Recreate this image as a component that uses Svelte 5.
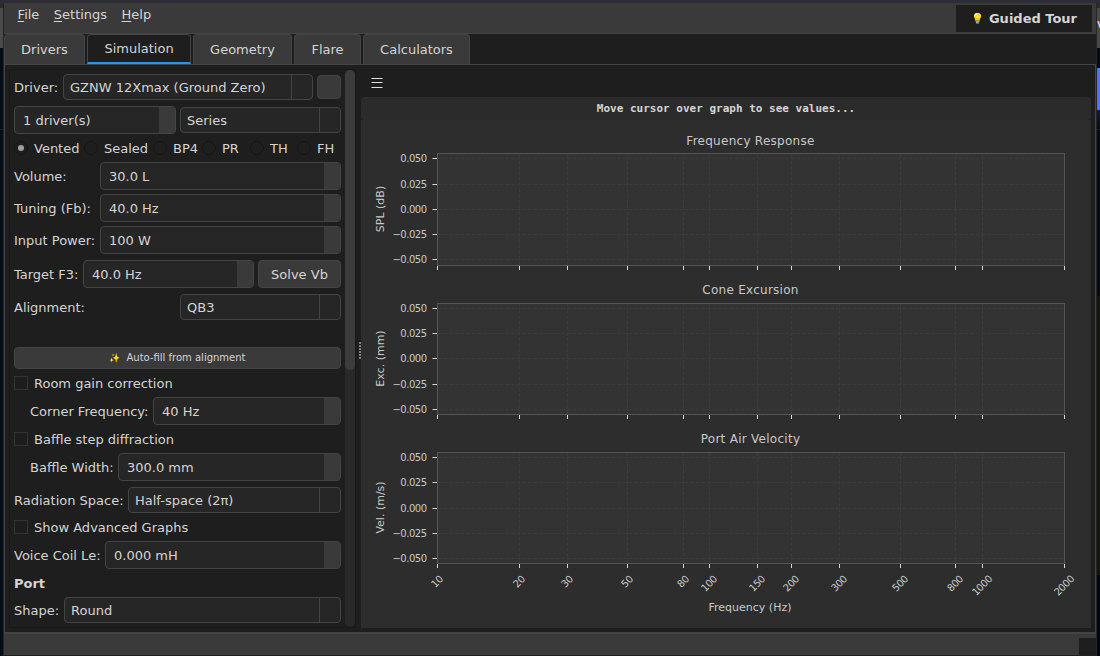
<script lang="ts">
	const menus = ['File', 'Settings', 'Help'];

	const tabs = [
		{ name: 'Drivers', width: 81 },
		{ name: 'Simulation', width: 104 },
		{ name: 'Geometry', width: 99 },
		{ name: 'Flare', width: 67 },
		{ name: 'Calculators', width: 107 }
	];
	let activeTab = $state('Simulation');

	const boxTypes = ['Vented', 'Sealed', 'BP4', 'PR', 'TH', 'FH'];
	let boxType = $state('Vented');

	const basics = [
		{ label: 'Volume:', value: '30.0 L' },
		{ label: 'Tuning (Fb):', value: '40.0 Hz' },
		{ label: 'Input Power:', value: '100 W' }
	];

	const left = 437;
	const right = 1064;
	const frequencies = [10, 20, 30, 50, 80, 100, 150, 200, 300, 500, 800, 1000, 2000];
	const tickLabels = ['0.050', '0.025', '0.000', '−0.025', '−0.050'];

	const plots = [
		{ title: 'Frequency Response', unit: 'SPL (dB)', top: 153, bottom: 265, ticks: [158, 184, 209, 234, 259] },
		{ title: 'Cone Excursion', unit: 'Exc. (mm)', top: 303, bottom: 414, ticks: [308, 333, 358, 384, 409] },
		{ title: 'Port Air Velocity', unit: 'Vel. (m/s)', top: 452, bottom: 563, ticks: [457, 482, 508, 533, 558] }
	];

	// log scale, 10 Hz to 2 kHz
	function xPos(f: number) {
		return Math.floor(left + ((right + 0.5 - left) * Math.log10(f / 10)) / Math.log10(200)) + 0.5;
	}
</script>

{#snippet combo(value: string)}
	<div class="combo">
		<span class="combo-value">{value}</span>
		<span class="combo-drop"></span>
	</div>
{/snippet}

{#snippet spin(value: string)}
	<div class="spin">
		<span class="spin-value">{value}</span>
		<span class="spin-buttons"></span>
	</div>
{/snippet}

{#snippet check(label: string)}
	<div class="row row-option">
		<span class="check"></span>
		<span>{label}</span>
	</div>
{/snippet}

<div class="desktop">
	<div class="behind behind-left"></div>
	<div class="window">
		<header class="menubar">
			<nav class="menus">
				{#each menus as menu}
					<span class="menu"><u>{menu[0]}</u>{menu.slice(1)}</span>
				{/each}
			</nav>
			<button class="tour"><span class="tour-icon">💡</span>Guided Tour</button>
		</header>

		<div class="tabs">
			{#each tabs as tab}
				<button
					class="tab"
					class:active={activeTab === tab.name}
					style="width: {tab.width}px"
					onclick={() => (activeTab = tab.name)}>{tab.name}</button
				>
			{/each}
		</div>

		<main class="pane">
			<aside class="sidebar">
				<div class="form">
					<div class="row">
						<span class="label">Driver:</span>
						{@render combo('GZNW 12Xmax (Ground Zero)')}
						<button class="btn btn-small" aria-label="Reload"></button>
					</div>
					<div class="row row-spaced wiring">
						{@render spin('1 driver(s)')}
						{@render combo('Series')}
					</div>
					<div class="row radios">
						{#each boxTypes as type}
							<button class="radio-item" onclick={() => (boxType = type)}>
								<span class="radio" class:on={boxType === type}></span>{type}
							</button>
						{/each}
					</div>
					{#each basics as field}
						<div class="row basic">
							<span class="label">{field.label}</span>
							{@render spin(field.value)}
						</div>
					{/each}
					<div class="row row-spaced target">
						<span class="label">Target F3:</span>
						{@render spin('40.0 Hz')}
						<button class="btn solve">Solve Vb</button>
					</div>
					<div class="row row-spaced alignment">
						<span class="label">Alignment:</span>
						{@render combo('QB3')}
					</div>
					<button class="btn autofill"><span class="sparkles">✨</span>Auto-fill from alignment</button>
					{@render check('Room gain correction')}
					<div class="row corner">
						<span class="label">Corner Frequency:</span>
						{@render spin('40 Hz')}
					</div>
					{@render check('Baffle step diffraction')}
					<div class="row baffle">
						<span class="label">Baffle Width:</span>
						{@render spin('300.0 mm')}
					</div>
					<div class="row row-spaced radiation">
						<span class="label">Radiation Space:</span>
						{@render combo('Half-space (2π)')}
					</div>
					{@render check('Show Advanced Graphs')}
					<div class="row coil">
						<span class="label">Voice Coil Le:</span>
						{@render spin('0.000 mH')}
					</div>
					<div class="row row-option heading">Port</div>
					<div class="row shape">
						<span class="label">Shape:</span>
						{@render combo('Round')}
					</div>
				</div>
				<div class="scrollbar"><div class="thumb"></div></div>
			</aside>

			<div class="splitter"><span class="grip"></span></div>

			<section class="graphs">
				<div class="toolbar">
					<svg width="12" height="12" viewBox="0 0 12 12" stroke="#e0e0e0">
						<path d="M.5 1.5h11M.5 5.5h11M.5 10.5h11" />
					</svg>
				</div>
				<div class="readout">Move cursor over graph to see values...</div>
				<svg class="figure" width="730" height="508" viewBox="361 120 730 508">
					{#each plots as plot}
						<rect
							class="axes"
							x={left + 0.5}
							y={plot.top + 0.5}
							width={right - left}
							height={plot.bottom - plot.top}
						/>
						{#each frequencies as f}
							<path class="grid" d="M{xPos(f)} {plot.bottom}V{plot.top + 1}" />
							<path class="tick" d="M{xPos(f)} {plot.bottom + 1}v4" />
						{/each}
						{#each plot.ticks as y, i}
							<path class="grid" d="M{left + 1} {y + 0.5}H{right}" />
							<path class="tick" d="M{left} {y + 0.5}h-4.5" />
							<text class="tick-label" x="426.5" y={y + 4} text-anchor="end">{tickLabels[i]}</text>
						{/each}
						<rect
							class="frame"
							x={left + 0.5}
							y={plot.top + 0.5}
							width={right - left}
							height={plot.bottom - plot.top}
						/>
						<text class="title" x="750.5" y={Math.round(plot.bottom - 120.2)} text-anchor="middle"
							>{plot.title}</text
						>
						<text
							class="axis-label"
							text-anchor="middle"
							transform="translate(384 {(plot.top + plot.bottom) / 2}) rotate(-90)">{plot.unit}</text
						>
					{/each}
					{#each frequencies as f}
						<text
							class="tick-label"
							text-anchor="middle"
							transform="translate({xPos(f) + 2} {580 + String(f).length * 2}) rotate(-45)">{f}</text
						>
					{/each}
					<text class="axis-label" x="750" y="611" text-anchor="middle">Frequency (Hz)</text>
				</svg>
			</section>
		</main>

		<footer class="statusbar"><span class="size-grip"></span></footer>
	</div>
	<div class="behind behind-right"><span>v</span></div>
</div>

<style>
	:global(body) {
		background: #1e1e1e;
		overflow: hidden;
	}

	.desktop {
		display: flex;
		width: 1100px;
		height: 656px;
		box-sizing: border-box;
		padding-top: 3px;
		overflow: hidden;
		background: #2d2d34;
		color: #d4d4d4;
		font-family: 'DejaVu Sans', sans-serif;
		font-size: 13px;
	}

	.desktop * {
		box-sizing: border-box;
	}

	button {
		margin: 0;
		padding: 0;
		border: none;
		background: none;
		color: inherit;
		font: inherit;
	}

	.behind {
		flex: none;
		overflow: hidden;
	}

	.behind-left {
		width: 4px;
		border-right: 1px solid #242526;
		background: linear-gradient(#2b2b2b 5px, #4a4a4a 5px 45px, #060c15 45px 126px, #15202a 126px 127px, #060c15 127px);
	}

	.behind-right {
		width: 4px;
		border-left: 1px solid #242526;
		background: linear-gradient(
			#2b2b2b 5px,
			#4a4846 5px 45px,
			#080b12 45px 65px,
			#5672f4 65px 107px,
			#151936 107px,
			#090b12 126px,
			#1b1d24 126px 127px,
			#080b12 127px 293px,
			#16140f 293px 572px,
			#000514 572px
		);
	}

	.behind-right span {
		display: block;
		margin-top: 14px;
		color: #fff;
		font-size: 12px;
	}

	.window {
		flex: 1;
		display: flex;
		flex-direction: column;
		background: #1e1e1e;
		border-bottom: 1px solid #211f22;
	}

	.menubar {
		display: flex;
		justify-content: space-between;
		height: 31px;
		padding-right: 4px;
		background: #3a3a3a;
		border-bottom: 1px solid #444;
	}

	.menus {
		display: flex;
		gap: 14.4px;
		padding: 3px 0 0 13.6px;
		line-height: 17px;
	}

	.menu u {
		text-underline-offset: 2px;
		text-decoration-thickness: 1px;
	}

	.tour {
		display: flex;
		align-items: center;
		justify-content: center;
		width: 136px;
		height: 27px;
		margin-top: 2px;
		background: #1e1e1e;
		font-weight: bold;
	}

	.tour-icon {
		margin-right: 5px;
		font-size: 10.5px;
	}

	.tabs {
		display: flex;
		gap: 2px;
		height: 30px;
	}

	.tab {
		height: 30px;
		border: 1px solid #444;
		border-bottom: none;
		border-radius: 4px 4px 0 0;
		background: #3a3a3a;
	}

	.tab.active {
		background: #1e1e1e;
		border-bottom: 2px solid #2196f3;
	}

	.pane {
		display: flex;
		height: 568px;
		padding: 4px 4px 4px;
		border: 1px solid #444;
		border-bottom: none;
	}

	.sidebar {
		display: flex;
		width: 347px;
		height: 559px;
		border: 1px solid #181818;
	}

	.form {
		flex: 1;
		display: flex;
		flex-direction: column;
		gap: 4px;
		padding: 4px 4px 0;
	}

	.row {
		display: flex;
		align-items: center;
		gap: 4px;
		flex: none;
	}

	.row-spaced {
		margin-top: 2px;
	}

	.row-option {
		height: 20px;
		gap: 6px;
	}

	.label {
		flex: none;
		white-space: nowrap;
	}

	.combo,
	.spin {
		display: flex;
		align-items: center;
		flex: 1;
		min-width: 0;
		border: 1px solid #444;
		border-radius: 4px;
		background: #262626;
		white-space: nowrap;
		overflow: hidden;
	}

	.combo {
		height: 26px;
		padding-left: 6px;
	}

	.spin {
		height: 28px;
		padding-left: 8px;
	}

	.combo-value,
	.spin-value {
		flex: 1;
	}

	.combo-drop {
		align-self: stretch;
		width: 21px;
		border-left: 1px solid #444;
	}

	.spin-buttons {
		align-self: stretch;
		width: 16px;
		background: #3a3a3a;
	}

	.btn {
		border: 1px solid #444;
		border-radius: 4px;
		background: #3a3a3a;
	}

	.row .label:first-child {
		width: 45px;
	}

	.btn-small {
		width: 24px;
		height: 24px;
	}

	.wiring .spin {
		flex: 0 0 162px;
	}

	.radios {
		display: grid;
		grid-template-columns: 70px 69px 49px 48px 47px 44px;
		gap: 0;
		height: 20px;
	}

	.radio-item {
		display: flex;
		align-items: center;
		gap: 6px;
	}

	.radio {
		display: flex;
		align-items: center;
		justify-content: center;
		width: 14px;
		height: 14px;
		border: 1px solid #161616;
		border-radius: 50%;
	}

	.radio.on::after {
		content: '';
		width: 6px;
		height: 6px;
		border-radius: 50%;
		background: #a0a0a0;
	}

	.row.basic .label {
		width: 82px;
	}

	.row.target .label {
		width: 65px;
	}

	.target .spin {
		flex: 0 0 171px;
	}

	.solve {
		flex: 1;
		height: 28px;
	}

	.row.alignment .label {
		width: 162px;
	}

	.autofill {
		flex: none;
		display: flex;
		align-items: center;
		justify-content: center;
		height: 22px;
		margin-top: 23px;
		padding-bottom: 1px;
		font-size: 10px;
	}

	.sparkles {
		margin-right: 6px;
		font-size: 9px;
	}

	.check {
		width: 14px;
		height: 14px;
		border: 1px solid #333;
	}

	.corner,
	.baffle {
		padding-left: 16px;
	}

	.row.corner .label {
		width: 119px;
	}

	.row.baffle .label {
		width: 84px;
	}

	.row.radiation .label {
		width: 110px;
	}

	.row.coil .label {
		width: 87px;
	}

	.heading {
		font-weight: bold;
	}

	.row.shape .label {
		width: 46px;
	}

	.scrollbar {
		width: 10px;
		border-radius: 5px;
		background: #292929;
	}

	.thumb {
		height: 300px;
		border-radius: 5px;
		background: #3c3c3c;
	}

	.splitter {
		display: flex;
		align-items: center;
		justify-content: flex-end;
		width: 5px;
		padding-top: 3px;
	}

	.grip {
		width: 2px;
		height: 17px;
		background: repeating-linear-gradient(#808080 0 2px, #1e1e1e 2px 3px);
	}

	.graphs {
		width: 730px;
		display: flex;
		flex-direction: column;
	}

	.toolbar {
		height: 28px;
		padding: 8px 10px;
		line-height: 0;
	}

	.readout {
		height: 23px;
		padding-top: 1px;
		border-radius: 4px;
		background: #2b2b2b;
		font: bold 11px/22px 'DejaVu Sans Mono', monospace;
		text-align: center;
	}

	.figure {
		display: block;
		background: #2d2d2d;
	}

	.axes {
		fill: #333;
	}

	.frame {
		fill: none;
		stroke: #555;
	}

	.grid {
		stroke: #3b3b3b;
		stroke-dasharray: 4 1.6;
	}

	.tick {
		stroke: #d8d8d8;
	}

	.title,
	.axis-label,
	.tick-label {
		fill: #c8c8c8;
	}

	.title {
		font-size: 12px;
		letter-spacing: 0.27px;
	}

	.axis-label {
		font-size: 11px;
	}

	.tick-label {
		font-size: 10px;
		letter-spacing: -0.5px;
	}

	.statusbar {
		display: flex;
		justify-content: flex-end;
		align-items: flex-end;
		height: 23px;
		border-top: 2px solid #444;
		background: #3a3a3a;
	}

	.size-grip {
		width: 17px;
		height: 17px;
		background: #1e1e1e;
	}
</style>
